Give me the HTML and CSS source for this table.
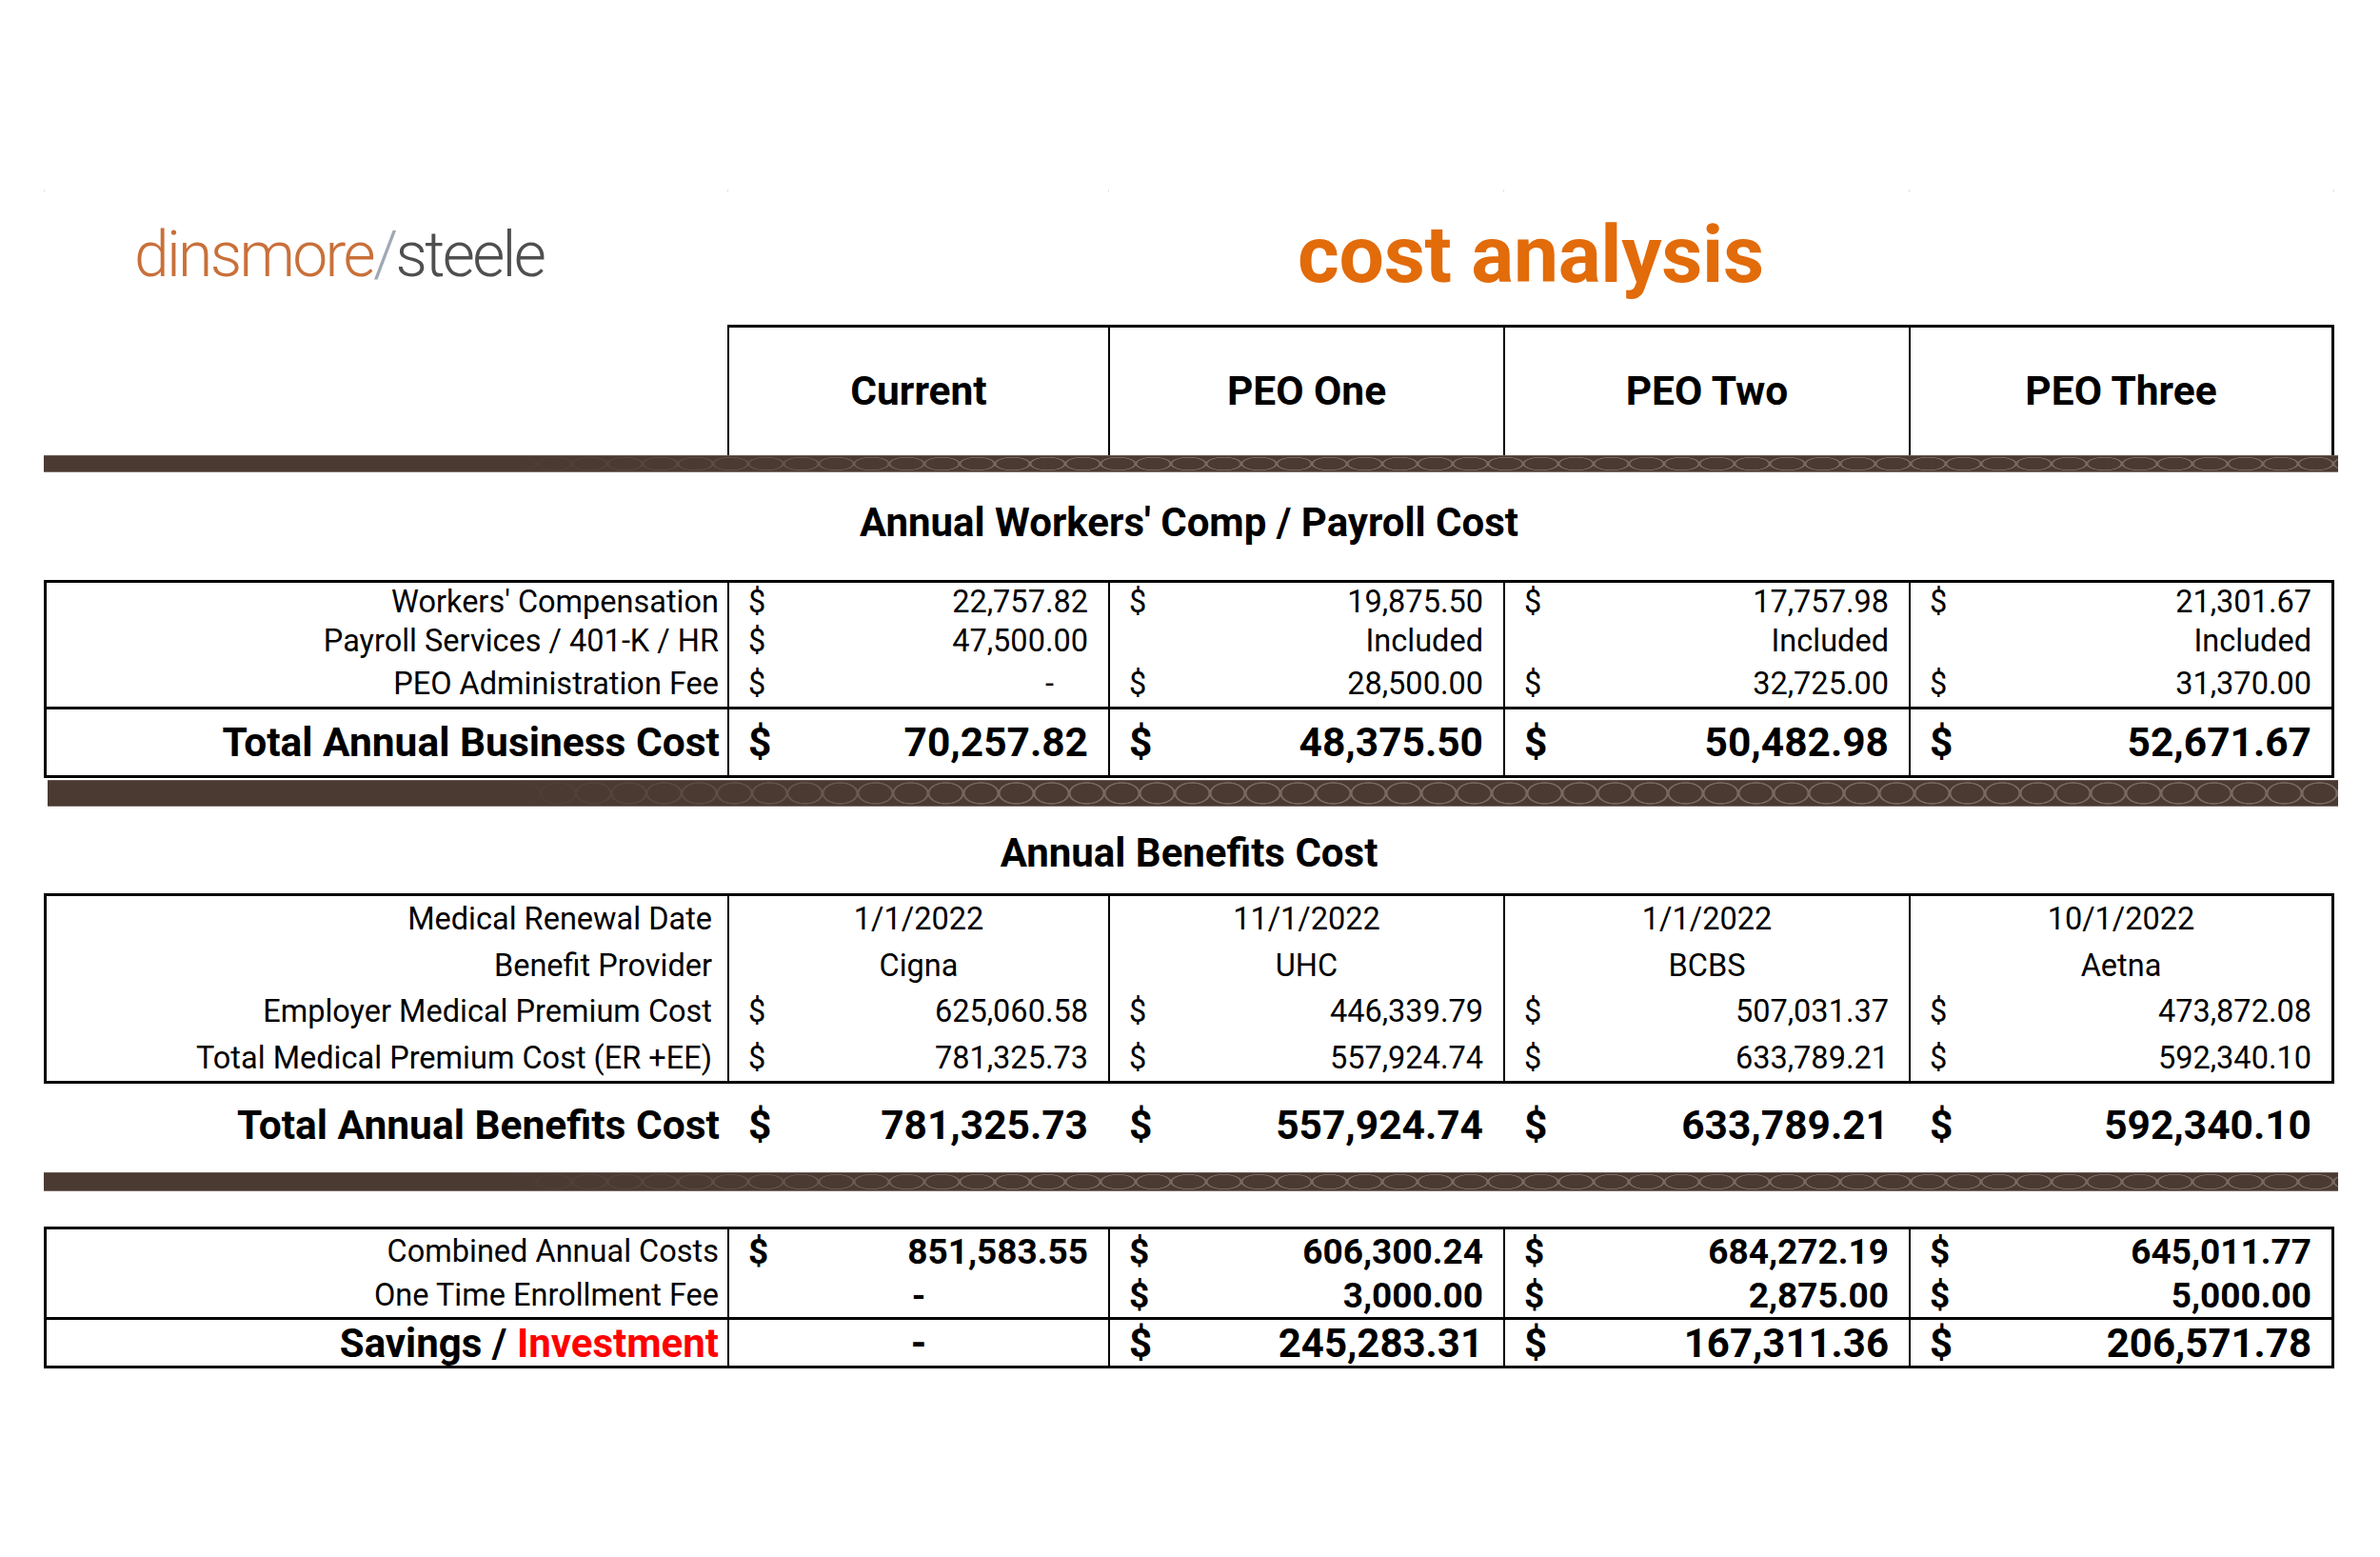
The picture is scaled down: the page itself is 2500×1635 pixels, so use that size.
FILE: index.html
```html
<!DOCTYPE html>
<html lang="en">
<head>
<meta charset="utf-8">
<title>cost analysis</title>
<link rel="stylesheet" href="styles.css">
</head>
<body>
<div class="page">
  <div class="marks"><i></i><i></i><i></i><i></i><i></i></div>

  <div class="brand">
    <div class="logo"><span class="l-a">dinsmore</span><span class="l-s">/</span><span class="l-b">steele</span></div>
    <div class="title">cost analysis</div>
  </div>

  <div class="head">
    <div class="h-blank"></div>
    <div class="h-cell">Current</div>
    <div class="h-cell">PEO One</div>
    <div class="h-cell">PEO Two</div>
    <div class="h-cell last">PEO Three</div>
  </div>
  <div class="bar bar1"></div>

  <div class="section s1">Annual Workers' Comp / Payroll Cost</div>

  <div class="box">
    <div class="row r1">
      <div class="lbl">Workers' Compensation</div>
      <div class="c m"><span>$</span><span>22,757.82</span></div>
      <div class="c m"><span>$</span><span>19,875.50</span></div>
      <div class="c m"><span>$</span><span>17,757.98</span></div>
      <div class="c m"><span>$</span><span>21,301.67</span></div>
    </div>
    <div class="row r2">
      <div class="lbl">Payroll Services / 401-K / HR</div>
      <div class="c m"><span>$</span><span>47,500.00</span></div>
      <div class="c m"><span></span><span>Included</span></div>
      <div class="c m"><span></span><span>Included</span></div>
      <div class="c m"><span></span><span>Included</span></div>
    </div>
    <div class="row r3">
      <div class="lbl">PEO Administration Fee</div>
      <div class="c m"><span>$</span><span class="dash">-</span></div>
      <div class="c m"><span>$</span><span>28,500.00</span></div>
      <div class="c m"><span>$</span><span>32,725.00</span></div>
      <div class="c m"><span>$</span><span>31,370.00</span></div>
    </div>
    <div class="row tot sep">
      <div class="lbl">Total Annual Business Cost</div>
      <div class="c m"><span>$</span><span>70,257.82</span></div>
      <div class="c m"><span>$</span><span>48,375.50</span></div>
      <div class="c m"><span>$</span><span>50,482.98</span></div>
      <div class="c m"><span>$</span><span>52,671.67</span></div>
    </div>
  </div>
  <div class="bar bar2"></div>

  <div class="section s2">Annual Benefits Cost</div>

  <div class="box">
    <div class="row b">
      <div class="lbl">Medical Renewal Date</div>
      <div class="c ctr">1/1/2022</div>
      <div class="c ctr">11/1/2022</div>
      <div class="c ctr">1/1/2022</div>
      <div class="c ctr">10/1/2022</div>
    </div>
    <div class="row b">
      <div class="lbl">Benefit Provider</div>
      <div class="c ctr">Cigna</div>
      <div class="c ctr">UHC</div>
      <div class="c ctr">BCBS</div>
      <div class="c ctr">Aetna</div>
    </div>
    <div class="row b">
      <div class="lbl">Employer Medical Premium Cost</div>
      <div class="c m"><span>$</span><span>625,060.58</span></div>
      <div class="c m"><span>$</span><span>446,339.79</span></div>
      <div class="c m"><span>$</span><span>507,031.37</span></div>
      <div class="c m"><span>$</span><span>473,872.08</span></div>
    </div>
    <div class="row b">
      <div class="lbl">Total Medical Premium Cost (ER +EE)</div>
      <div class="c m"><span>$</span><span>781,325.73</span></div>
      <div class="c m"><span>$</span><span>557,924.74</span></div>
      <div class="c m"><span>$</span><span>633,789.21</span></div>
      <div class="c m"><span>$</span><span>592,340.10</span></div>
    </div>
  </div>
  <div class="row free tot">
    <div class="lbl">Total Annual Benefits Cost</div>
    <div class="c m"><span>$</span><span>781,325.73</span></div>
    <div class="c m"><span>$</span><span>557,924.74</span></div>
    <div class="c m"><span>$</span><span>633,789.21</span></div>
    <div class="c m"><span>$</span><span>592,340.10</span></div>
  </div>
  <div class="bar bar3"></div>

  <div class="box last-box">
    <div class="row k">
      <div class="lbl">Combined Annual Costs</div>
      <div class="c m strong"><span>$</span><span>851,583.55</span></div>
      <div class="c m strong"><span>$</span><span>606,300.24</span></div>
      <div class="c m strong"><span>$</span><span>684,272.19</span></div>
      <div class="c m strong"><span>$</span><span>645,011.77</span></div>
    </div>
    <div class="row k">
      <div class="lbl">One Time Enrollment Fee</div>
      <div class="c ctr strong">-</div>
      <div class="c m strong"><span>$</span><span>3,000.00</span></div>
      <div class="c m strong"><span>$</span><span>2,875.00</span></div>
      <div class="c m strong"><span>$</span><span>5,000.00</span></div>
    </div>
    <div class="row sav sep">
      <div class="lbl">Savings / <span class="red">Investment</span></div>
      <div class="c ctr">-</div>
      <div class="c m"><span>$</span><span>245,283.31</span></div>
      <div class="c m"><span>$</span><span>167,311.36</span></div>
      <div class="c m"><span>$</span><span>206,571.78</span></div>
    </div>
  </div>
</div>
</body>
</html>
```

FILE: styles.css
```css
* { box-sizing: border-box; }
html, body { margin: 0; padding: 0; background: #fff; }
body {
  font-family: Roboto, "Liberation Sans", Arial, sans-serif;
  color: #000;
}
.page {
  width: 2500px;
  height: 1635px;
  padding: 199px 0 0 46px;
  overflow: hidden;
}

/* faint page marks */
.marks {
  display: grid;
  grid-template-columns: 718px 400px 415px 426px 447px;
  width: 2406px;
  height: 3px;
}
.marks i { border-left: 1px solid #e2e2e2; }
.marks i:last-child { border-right: 1px solid #e2e2e2; }

/* brand row */
.brand {
  display: grid;
  grid-template-columns: 718px 1688px;
  height: 139px;
}
.logo {
  padding-left: 95px;
  margin-top: 33px;
  font-weight: 300;
  font-size: 66px;
  line-height: 66px;
  letter-spacing: -2.7px;
  white-space: nowrap;
}
.l-a { color: #c9703a; }
.l-s { color: #9fa9b3; }
.l-b { color: #4f4f4f; }
.title {
  text-align: center;
  margin-top: 24px;
  font-weight: 700;
  font-size: 84px;
  line-height: 84px;
  color: #e26b0a;
  letter-spacing: -0.3px;
}

/* header row */
.head {
  display: grid;
  grid-template-columns: 718px 400px 415px 426px 447px;
  width: 2406px;
  height: 137px;
}
.h-cell {
  border-top: 3px solid #000;
  border-left: 2px solid #000;
  display: flex;
  align-items: center;
  justify-content: center;
  font-weight: 700;
  font-size: 42.5px;
  padding-bottom: 2px;
}
.h-cell.last { border-right: 3px solid #000; }

/* decorative brown bars */
.bar {
  width: 2410px;
  background-color: #4a3a32;
  background-image:
    linear-gradient(to right, #4a3a32 20%, rgba(74, 58, 50, 0) 42%),
    radial-gradient(20px 47% at 50% 50%, rgba(150, 135, 128, 0) 82%, rgba(150, 135, 128, 0.6) 87%, rgba(150, 135, 128, 0.6) 93%, rgba(150, 135, 128, 0) 98%);
  background-size: 100% 100%, 37px 100%;
  background-position: 0 0, 0 0;
  border-top: 1px solid #6b5d56;
  border-bottom: 1px solid #7d716b;
}
.bar1 { height: 18px; }
.bar2 { height: 28px; margin-top: 2px; margin-left: 4px; width: 2406px; }
.bar3 { height: 20px; }

/* section titles */
.section {
  display: flex;
  align-items: center;
  justify-content: center;
  width: 2406px;
  font-weight: 700;
  font-size: 42px;
}
.s1 { height: 113px; padding-bottom: 9px; }
.s2 { height: 91px; padding-top: 5px; }

/* boxes and rows */
.box {
  width: 2406px;
  border: 3px solid #000;
}
.last-box { margin-top: 37px; }
.row {
  display: grid;
  grid-template-columns: 715px 400px 415px 426px 444px;
  font-size: 32.5px;
}
.row > div { display: flex; align-items: center; white-space: nowrap; }
.row .lbl { justify-content: flex-end; padding-right: 9px; }
.row .c { border-left: 2px solid #000; }
.row .m { justify-content: space-between; padding: 0 21px 0 20px; }
.row .ctr { justify-content: center; }
.dash { padding-right: 36px; }

.r1 { height: 40px; }
.r2 { height: 42px; }
.r3 { height: 48px; }
.sep { border-top: 3px solid #000; }
.tot { height: 72px; font-size: 42.5px; font-weight: 700; }
.tot .lbl { padding-right: 8px; }
.b { height: 48.5px; }
.b .lbl { padding-right: 16px; }

.free {
  width: 2406px;
  height: 93px;
  padding: 0 3px 7px;
}
.free .c { border-left: 0; }
.free .m { padding-left: 22px; }

.k { height: 46px; }
.strong { font-weight: 700; font-size: 37px; }
.sav { height: 51px; font-size: 42px; font-weight: 700; }
.red { color: #ff0000; }
.sav .lbl span { margin-left: 0.25em; }
```
